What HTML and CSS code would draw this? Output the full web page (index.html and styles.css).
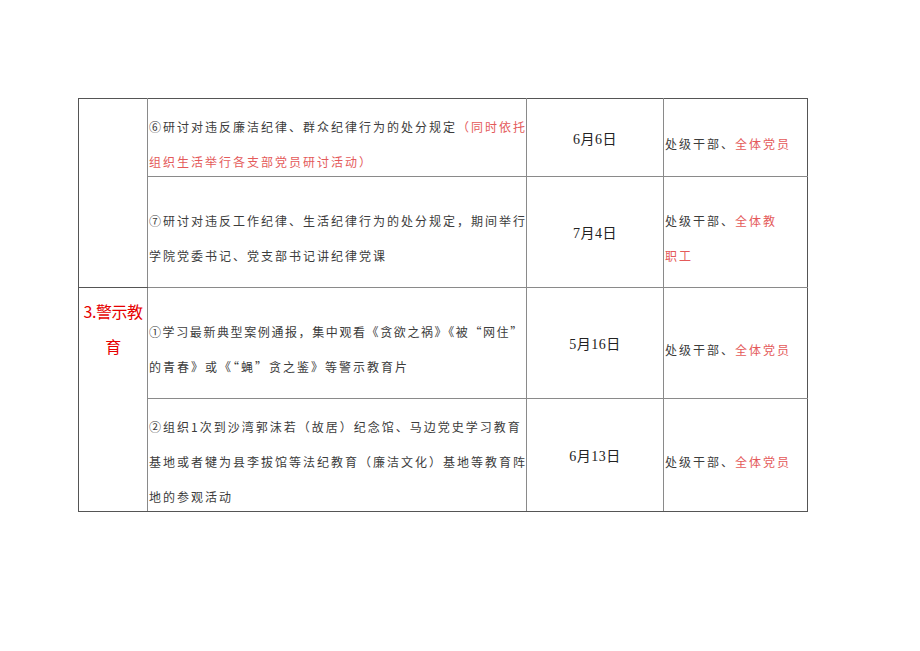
FILE: index.html
```html
<!DOCTYPE html>
<html lang="zh-CN">
<head>
<meta charset="utf-8">
<link rel="stylesheet" href="styles.css">
</head>
<body>
<div class="page">
<table class="plan">
  <colgroup>
    <col class="c1"><col class="c2"><col class="c3"><col class="c4">
  </colgroup>
  <tr class="r1">
    <td class="cat" rowspan="2"></td>
    <td class="desc"><div class="box">
      <div class="ln">⑥研讨对违反廉洁纪律、群众纪律行为的处分规定<span class="red">（同时依托</span></div>
      <div class="ln red">组织生活举行各支部党员研讨活动）</div>
    </div></td>
    <td class="date">6月6日</td>
    <td class="who"><div class="box">处级干部、<span class="red">全体党员</span></div></td>
  </tr>
  <tr class="r2">
    <td class="desc"><div class="box">
      <div class="ln">⑦研讨对违反工作纪律、生活纪律行为的处分规定，期间举行</div>
      <div class="ln">学院党委书记、党支部书记讲纪律党课</div>
    </div></td>
    <td class="date">7月4日</td>
    <td class="who"><div class="box"><div class="ln">处级干部、<span class="red">全体教</span></div><div class="ln red">职工</div></div></td>
  </tr>
  <tr class="r3">
    <td class="cat" rowspan="2"><div class="title">3.警示教<br>育</div></td>
    <td class="desc"><div class="box">
      <div class="ln tight">①学习最新典型案例通报，集中观看《贪欲之祸》《被“网住”</div>
      <div class="ln">的青春》或《“蝇”贪之鉴》等警示教育片</div>
    </div></td>
    <td class="date">5月16日</td>
    <td class="who"><div class="box">处级干部、<span class="red">全体党员</span></div></td>
  </tr>
  <tr class="r4">
    <td class="desc"><div class="box">
      <div class="ln">②组织1次到沙湾郭沫若（故居）纪念馆、马边党史学习教育</div>
      <div class="ln">基地或者犍为县李拔馆等法纪教育（廉洁文化）基地等教育阵</div>
      <div class="ln">地的参观活动</div>
    </div></td>
    <td class="date">6月13日</td>
    <td class="who"><div class="box">处级干部、<span class="red">全体党员</span></div></td>
  </tr>
</table>
</div>
</body>
</html>
```
FILE: styles.css
```css
html, body {
  margin: 0;
  padding: 0;
  background: #ffffff;
}
.page {
  padding: 98px 0 0 78px;
}
.plan {
  border-collapse: collapse;
  table-layout: fixed;
  width: 729px;
  font-family: "Noto Sans CJK SC", sans-serif;
  font-size: 12px;
  color: #3c3c3c;
}
.plan td {
  border: 1px solid #8a8a8a;
  padding: 0;
  vertical-align: middle;
}
.c1 { width: 69px; }
.c2 { width: 379px; }
.c3 { width: 137px; }
.c4 { width: 144px; }
.r1 td { height: 77px; }
.r2 td { height: 110px; }
.r3 td { height: 110px; }
.r4 td { height: 112px; }
.plan td.cat {
  vertical-align: top;
  text-align: center;
  border-left-color: #555;
}
.title {
  padding-top: 6px;
  font-size: 16px;
  line-height: 35px;
  color: #e60000;
  letter-spacing: -0.5px;
}
.plan td.desc,
.plan td.who {
  padding-left: 1px;
  letter-spacing: 2px;
  line-height: 35px;
  white-space: nowrap;
}
.box {
  margin-top: 6px;
  margin-bottom: -6px;
}
.ln {
  white-space: nowrap;
}
.tight {
  letter-spacing: 1.6px;
}
.date {
  text-align: center;
  font-family: "Liberation Serif", "Noto Sans CJK SC", serif;
  font-size: 14px;
  color: #222;
  letter-spacing: 0.5px;
}
.red {
  color: #e45a5a;
}
.plan tr:first-child td { border-top-color: #555; }
.plan tr:last-child td, .plan td.cat[rowspan] { border-bottom-color: #555; }
.plan td.who { border-right-color: #555; }
```
